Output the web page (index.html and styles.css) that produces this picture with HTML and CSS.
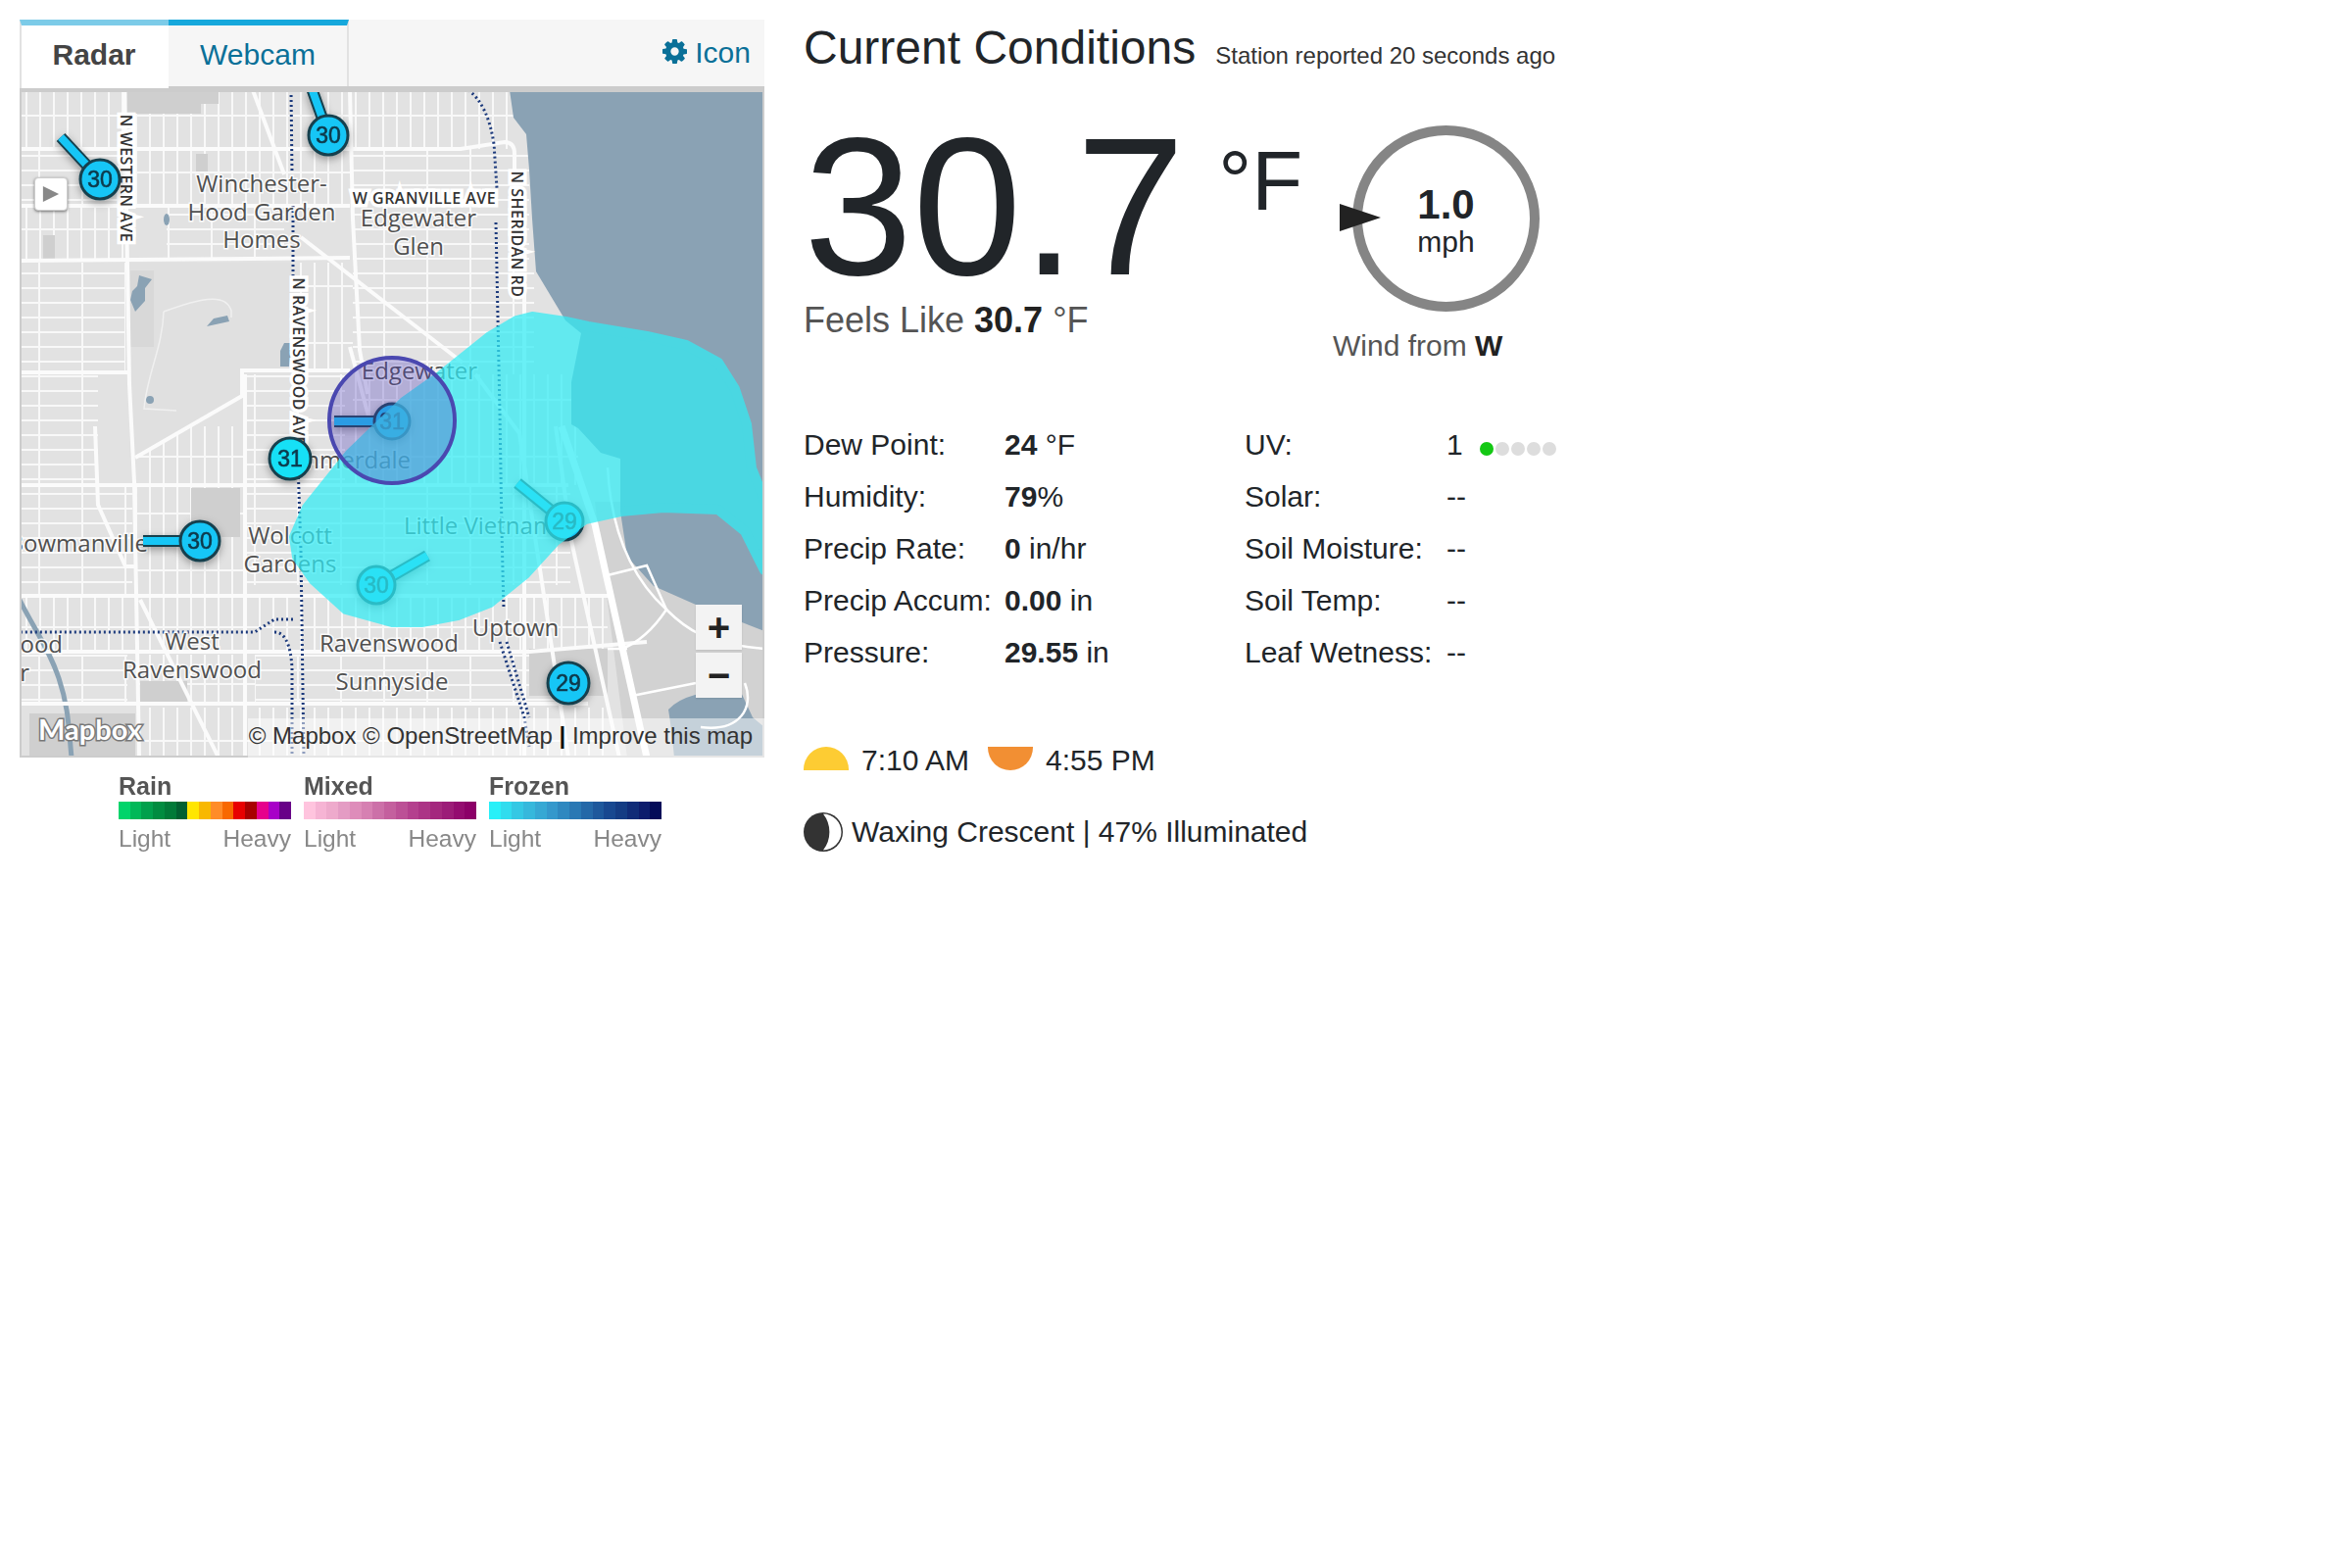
FILE: index.html
```html
<!DOCTYPE html>
<html lang="en">
<head>
    <meta charset="UTF-8">
    <title>Current Conditions</title>
    <link rel="stylesheet" href="styles.css">
</head>
<body>
<div class="page">
    <section class="left">
        <div class="tabs">
            <a class="tab active">Radar</a>
            <a class="tab">Webcam</a>
            <a class="icon-link">
                <svg class="gear" viewBox="0 0 1536 1536"><path d="M1024 768q0-106-75-181t-181-75-181 75-75 181 75 181 181 75 181-75 75-181zm512-109v222q0 12-8 23t-20 13l-185 28q-19 54-39 91 35 50 107 138 10 12 10 25t-9 23q-27 37-99 108t-94 71q-12 0-26-9l-138-108q-44 23-91 38-16 136-29 186-7 28-36 28h-222q-14 0-24.500-8.500t-11.500-21.500l-28-184q-49-16-90-37l-141 107q-10 9-25 9-14 0-25-11-126-114-165-168-7-10-7-23 0-12 8-23 15-21 51-66.500t54-70.500q-27-50-41-99l-183-27q-13-2-21-12.500t-8-23.500v-222q0-12 8-23t19-13l186-28q14-46 39-92-40-57-107-138-10-12-10-24 0-10 9-23 26-36 98.500-107.500t94.500-71.500q13 0 26 10l138 107q44-23 91-38 16-136 29-186 7-28 36-28h222q14 0 24.500 8.500t11.500 21.500l28 184q49 16 90 37l142-107q9-9 24-9 13 0 25 10 129 119 165 170 7 8 7 22 0 12-8 23-15 21-51 66.500t-54 70.500q26 50 41 98l183 28q13 2 21 12.500t8 23.500z"/></svg>
                Icon
            </a>
        </div>

        <div class="map">
            <svg class="map-svg" viewBox="0 0 760 681">
                <defs>
                    <pattern id="blocksV" width="14" height="58" patternUnits="userSpaceOnUse">
                        <path d="M7 0V58M0 26H14" class="minor"/>
                    </pattern>
                    <pattern id="blocksH" width="44" height="15" patternUnits="userSpaceOnUse">
                        <path d="M0 7H44M20 0V15" class="minor"/>
                    </pattern>
                    <filter id="pinShadow" x="-40%" y="-40%" width="180%" height="180%">
                        <feDropShadow dx="0" dy="3" stdDeviation="4" flood-color="#000" flood-opacity=".35"/>
                    </filter>
                </defs>

                <rect class="land" width="760" height="681"/>
                <!-- street blocks -->
                <rect fill="url(#blocksV)" width="340" height="60"/>
                <rect fill="url(#blocksV)" x="340" width="170" height="60"/>
                <rect fill="url(#blocksH)" y="60" width="108" height="58"/>
                <rect fill="url(#blocksV)" x="112" y="60" width="225" height="56"/>
                <rect fill="url(#blocksH)" x="340" y="60" width="180" height="120"/>
                <rect fill="url(#blocksV)" y="118" width="108" height="55"/>
                <rect fill="url(#blocksH)" x="150" y="118" width="120" height="55"/>
                <rect fill="url(#blocksH)" y="176" width="108" height="112"/>
                <rect fill="url(#blocksV)" x="280" y="176" width="60" height="110"/>
                <rect fill="url(#blocksH)" x="340" y="180" width="185" height="110"/>
                <rect fill="url(#blocksH)" y="290" width="80" height="112"/>
                <rect fill="url(#blocksV)" x="120" y="343" width="110" height="60"/>
                <rect fill="url(#blocksH)" x="232" y="290" width="100" height="112"/>
                <rect fill="url(#blocksV)" x="340" y="290" width="230" height="113"/>
                <rect fill="url(#blocksH)" y="405" width="115" height="110"/>
                <rect fill="url(#blocksV)" x="118" y="405" width="112" height="110"/>
                <rect fill="url(#blocksH)" x="232" y="405" width="330" height="100"/>
                <rect fill="url(#blocksV)" x="0" y="518" width="600" height="55"/>
                <rect fill="url(#blocksH)" x="0" y="576" width="110" height="50"/>
                <rect fill="url(#blocksV)" x="120" y="576" width="120" height="50"/>
                <rect fill="url(#blocksH)" x="240" y="576" width="330" height="50"/>
                <rect fill="url(#blocksV)" x="120" y="630" width="480" height="50"/>

                <!-- darker lots -->
                <path class="lot" d="M110 0H203V14H185V24H110Z"/>
                <rect class="lot" x="175" y="406" width="50" height="50"/>
                <rect class="lot" x="123" y="603" width="48" height="25"/>
                <rect class="lot" x="10" y="636" width="108" height="44"/>
                <rect class="lot" x="180" y="65" width="12" height="18"/>
                <rect class="lot" x="24" y="148" width="12" height="24"/>
                <rect class="lot" x="520" y="570" width="80" height="48"/>

                <!-- park and lakefront -->
                <path class="park" d="M112 176H280V286H227V312L118 375H112Z"/>
                <rect class="park-lot" x="113" y="184" width="24" height="78"/>
                <path class="shore" d="M587 420L760 420V681H620Z"/>
                <path class="lake" d="M500 0L504 28 517 45 520 81 523 131 527 185 557 235 573 248 563 298 563 341 570 345 593 370 613 376 613 430 620 476 647 506 690 525 737 543 760 552V0Z"/>
                <path class="lake" d="M662 632Q680 612 735 612L748 640 760 650V681H668Q665 650 662 632Z"/>
                <path class="pond" d="M122 189L135 193 128 202 128 215 118 226 113 214 115 205 120 200Z"/>
                <path class="pond" d="M191 241L214 236 212 230 198 233Z"/>
                <path class="pond" d="M266 266V282L275 282 278 258 270 258Z"/>
                <circle class="pond" cx="133" cy="316" r="4"/>
                <ellipse class="pond" cx="150" cy="132" rx="3" ry="6"/>
                <path class="creek" d="M0 520C15 550 30 570 40 600S50 650 53 681"/>
                <path class="trail" d="M147 226C180 214 210 205 216 225V232M147 226C146 262 130 290 127 325L160 327"/>

                <!-- main roads -->
                <path class="major" d="M107 0L112 300 117 400 122 681"/>
                <path class="major" d="M337 0L340 131 347 265 355 310"/>
                <path class="major" d="M230 290V681"/>
                <path class="major" d="M0 60H450L495 53Q505 53 505 65V100"/>
                <path class="major" d="M0 118H337"/>
                <path class="major" d="M0 174L337 171"/>
                <path class="major" d="M0 288H110"/>
                <path class="major" d="M0 403H560"/>
                <path class="major" d="M0 516H600"/>
                <path class="major" d="M0 573H520L640 563"/>
                <path class="major" d="M0 626H580"/>
                <path class="major" d="M238 0L270 86"/>
                <path class="major" d="M287 150L452 278"/>
                <path class="major" d="M118 375L227 312V286H337"/>
                <path class="major" d="M77 343L80 423 108 486H117"/>
                <path class="major" d="M123 520L203 681"/>
                <path class="major" d="M337 262L358 340"/>
                <path class="major" d="M515 200V681"/>
                <path class="major" d="M465 290L510 350 560 681"/>
                <path class="major" d="M547 343L563 460 612 681"/>
                <path class="major wide" d="M553 343L587 443 640 681"/>
                <path class="thin" d="M600 385Q605 480 660 530 640 560 615 570"/>
                <path class="thin" d="M600 495L640 485 660 530M600 570H620M625 618L690 605"/>
                <path class="thin" d="M660 530C680 550 700 565 760 570"/>
                <path class="thin" d="M740 605C750 630 735 655 695 650"/>

                <!-- transit lines -->
                <path class="rail" d="M277 0L278 85M279 118V195M284 380L287 470 290 681"/>
                <path class="rail" d="M279 540H260L240 553H0"/>
                <path class="rail" d="M260 553Q276 553 278 590V681"/>
                <path class="rail" d="M458 0Q478 15 484 55L487 100M486 135L490 330 492 450 494 530"/>
                <path class="rail" d="M490 563L515 640 520 670"/>
                <path class="rail" d="M497 563L520 640"/>

                <!-- place names -->
                <g class="place">
                    <text x="247" y="104">Winchester-</text>
                    <text x="247" y="133">Hood Garden</text>
                    <text x="247" y="161">Homes</text>
                    <text x="407" y="139">Edgewater</text>
                    <text x="407" y="168">Glen</text>
                    <text x="408" y="295">Edgewater</text>
                    <text x="399" y="386" class="end">Summerdale</text>
                    <text x="392" y="453" class="start">Little Vietnam</text>
                    <text x="276" y="463">Wolcott</text>
                    <text x="276" y="492">Gardens</text>
                    <text x="131" y="471" class="end">Bowmanville</text>
                    <text x="176" y="571">West</text>
                    <text x="176" y="600">Ravenswood</text>
                    <text x="377" y="573">Ravenswood</text>
                    <text x="506" y="557">Uptown</text>
                    <text x="380" y="612">Sunnyside</text>
                    <text x="44" y="574" class="end">Edgewood</text>
                    <text x="10" y="603" class="end">Lincoln Square r</text>
                </g>

                <!-- road names -->
                <g class="road">
                    <text x="413" y="116">W GRANVILLE AVE</text>
                    <text transform="translate(107.500 90) rotate(90)" y="5">N WESTERN AVE</text>
                    <text transform="translate(507 147) rotate(90)" y="5">N SHERIDAN RD</text>
                    <text transform="translate(283.500 277) rotate(90)" y="5">N RAVENSWOOD AVE</text>
                </g>

                <!-- pins -->
                <g class="pin">
                    <path class="stalk" d="M42 48L82 91"/><path class="stalk-in" d="M42 48L82 91"/>
                    <circle cx="82" cy="91" r="20"/><text x="82" y="99">30</text>
                </g>
                <g class="pin">
                    <path class="stalk" d="M298 -2L315 46"/><path class="stalk-in" d="M298 -2L315 46"/>
                    <circle cx="315" cy="46" r="20"/><text x="315" y="54">30</text>
                </g>
                <g class="pin">
                    <path class="stalk" d="M321 338H380"/><path class="stalk-in" d="M321 338H380"/>
                    <circle cx="380" cy="338" r="18"/><text x="380" y="346">31</text>
                </g>
                <g class="pin bright">
                    <circle cx="276" cy="376" r="21"/><text x="276" y="384">31</text>
                </g>
                <g class="pin">
                    <path class="stalk" d="M126 460H184"/><path class="stalk-in" d="M126 460H184"/>
                    <circle cx="184" cy="460" r="20"/><text x="184" y="468">30</text>
                </g>
                <g class="pin">
                    <path class="stalk" d="M416 475L364 505"/><path class="stalk-in" d="M416 475L364 505"/>
                    <circle cx="364" cy="505" r="19"/><text x="364" y="513">30</text>
                </g>
                <g class="pin">
                    <path class="stalk" d="M508 401L556 440"/><path class="stalk-in" d="M508 401L556 440"/>
                    <circle cx="556" cy="440" r="19"/><text x="556" y="448">29</text>
                </g>
                <g class="pin">
                    <circle cx="560" cy="605" r="21"/><text x="560" y="613">29</text>
                </g>

                <!-- frozen radar echo, station circle sits above it -->
                <path class="echo" d="M392 318L430 291 450 275 480 251 507 235 523 231 557 236 580 241 640 251 680 260 713 278 730 305 742 341 747 386 758 413 760 420V490L740 450 713 428 657 426 613 430 577 438 547 460 517 493 480 523 447 536 410 543 380 543 333 530 300 500 283 476 280 456 293 426 317 396 337 371Z"/>
                <circle class="station" cx="380" cy="337" r="64"/>

                <!-- logo -->
                <text class="logo" x="19" y="663">Mapbox</text>
            </svg>

            <button class="play"><svg viewBox="0 0 20 20"><path d="M1 1L19 10 1 19Z"/></svg></button>
            <div class="zoom-ctrl">
                <div class="zoom-btn">+</div>
                <div class="zoom-btn">−</div>
            </div>
            <div class="attrib">© Mapbox © OpenStreetMap <b class="sep">|</b> Improve this map</div>
        </div>

        <div class="legend">
            <div class="legend-col">
                <div class="legend-title">Rain</div>
                <div class="bar bar-rain"></div>
                <div class="legend-ends"><span>Light</span><span>Heavy</span></div>
            </div>
            <div class="legend-col">
                <div class="legend-title">Mixed</div>
                <div class="bar bar-mixed"></div>
                <div class="legend-ends"><span>Light</span><span>Heavy</span></div>
            </div>
            <div class="legend-col">
                <div class="legend-title">Frozen</div>
                <div class="bar bar-frozen"></div>
                <div class="legend-ends"><span>Light</span><span>Heavy</span></div>
            </div>
        </div>
    </section>

    <section class="right">
        <div class="heading">
            <h1>Current Conditions</h1>
            <span class="reported">Station reported 20 seconds ago</span>
        </div>

        <div class="now">
            <div class="temp-block">
                <div class="temp-row">
                    <span class="temp">30.7</span>
                    <span class="temp-unit">°F</span>
                </div>
                <div class="feels">Feels Like <b>30.7</b> °F</div>
            </div>
            <div class="wind-block">
                <div class="dial">
                    <svg class="dial-arrow" viewBox="0 0 42 28"><path d="M0 0L42 14 0 28Z"/></svg>
                    <b class="speed">1.0</b>
                    <span class="speed-unit">mph</span>
                </div>
                <div class="wind-from">Wind from <b>W</b></div>
            </div>
        </div>

        <div class="stats">
            <div class="stat-grid">
                <span>Dew Point:</span><span><b>24</b> °F</span>
                <span>Humidity:</span><span><b>79</b>%</span>
                <span>Precip Rate:</span><span><b>0</b> in/hr</span>
                <span>Precip Accum:</span><span><b>0.00</b> in</span>
                <span>Pressure:</span><span><b>29.55</b> in</span>
            </div>
            <div class="stat-grid second">
                <span>UV:</span>
                <span class="uv">1
                    <i class="dots"><i class="dot on"></i><i class="dot"></i><i class="dot"></i><i class="dot"></i><i class="dot"></i></i>
                </span>
                <span>Solar:</span><span>--</span>
                <span>Soil Moisture:</span><span>--</span>
                <span>Soil Temp:</span><span>--</span>
                <span>Leaf Wetness:</span><span>--</span>
            </div>
        </div>

        <div class="sun">
            <i class="sunrise"></i><span>7:10 AM</span>
            <i class="sunset"></i><span>4:55 PM</span>
        </div>

        <div class="moon">
            <svg class="moon-icon" viewBox="0 0 40 40">
                <circle cx="20" cy="20" r="20" fill="#333"/>
                <path d="M20 1.500A18.500 18.500 0 0 1 20 38.500A30 30 0 0 0 20 1.500Z" fill="#fff"/>
            </svg>
            <span>Waxing Crescent | 47% Illuminated</span>
        </div>
    </section>
</div>
</body>
</html>
```

FILE: styles.css
```css
body {
    margin: 0;
    background: #fff;
    color: #212529;
    font-family: "Liberation Sans", Arial, sans-serif;
}
.page {
    display: flex;
    gap: 40px;
    padding: 20px;
}
.left {
    width: 760px;
    flex: none;
}

/* tabs */
.tabs {
    display: flex;
    align-items: stretch;
    height: 68px;
    background: #f6f6f6;
    border-bottom: 4px solid #ccc;
}
.tab {
    display: flex;
    align-items: center;
    justify-content: center;
    box-sizing: border-box;
    width: 184px;
    padding-bottom: 2px;
    border-top: 6px solid #16a8dc;
    border-right: 2px solid #e2e2e2;
    font-size: 30px;
    color: #0a7098;
}
.tab.active {
    width: 152px;
    height: 70px;
    padding: 0 2px 4px 0;
    border-top-color: #7ccbe8;
    border-left: 2px solid #e2e2e2;
    border-right: none;
    background: #fff;
    font-weight: bold;
    color: #444;
}
.icon-link {
    display: flex;
    align-items: center;
    gap: 8px;
    margin-left: auto;
    padding: 0 14px 0 0;
    font-size: 30px;
    color: #0a7098;
}
.gear {
    width: 25px;
    height: 25px;
    margin-bottom: 3px;
    fill: #0a7098;
}

/* map */
.map {
    position: relative;
    height: 681px;
    overflow: hidden;
    outline: 2px solid #ccc;
    outline-offset: -2px;
}
.map-svg {
    display: block;
    width: 100%;
    height: 100%;
}
.land { fill: #e2e2e2; }
.lot { fill: #cfcfcf; }
.park { fill: #e0e0e0; }
.park-lot { fill: #d8d8d8; }
.shore { fill: #d2d2d2; }
.lake { fill: #8aa2b4; }
.pond { fill: #8aa2b4; }
.creek { fill: none; stroke: #8aa2b4; stroke-width: 5; }
.trail { fill: none; stroke: #f0f0f0; stroke-width: 1.500; }
.minor { fill: none; stroke: #f8f8f8; stroke-width: 2; }
.major { fill: none; stroke: #fbfbfb; stroke-width: 4; }
.major.wide { stroke: #fff; stroke-width: 7; }
.thin { fill: none; stroke: #fff; stroke-width: 2.500; }
.rail {
    fill: none;
    stroke: #1c3a7c;
    stroke-width: 3;
    stroke-dasharray: 2 3;
}
.place text {
    font-family: "Open Sans", sans-serif;
    font-size: 24px;
    text-anchor: middle;
    fill: #505050;
    stroke: rgba(255, 255, 255, .85);
    stroke-width: 3px;
    paint-order: stroke;
}
.place text.end { text-anchor: end; }
.place text.start { text-anchor: start; }
.road text {
    font-family: "Open Sans", sans-serif;
    font-size: 16px;
    font-weight: 600;
    letter-spacing: .5px;
    text-anchor: middle;
    fill: #333;
    stroke: #fff;
    stroke-width: 7px;
    paint-order: stroke;
}
.station {
    fill: rgba(84, 70, 190, .33);
    stroke: #4a48b0;
    stroke-width: 4;
}
.pin { filter: url(#pinShadow); }
.pin circle {
    fill: #18c6f6;
    stroke: #17404e;
    stroke-width: 3;
}
.pin.bright circle { fill: #12e0f6; }
.pin text {
    font-family: "Liberation Sans", sans-serif;
    font-size: 23px;
    text-anchor: middle;
    fill: #0d3a4c;
    stroke: #0d3a4c;
    stroke-width: .6px;
}
.stalk { fill: none; stroke: #17404e; stroke-width: 12; }
.stalk-in { fill: none; stroke: #18c6f6; stroke-width: 8; }
.echo {
    fill: rgb(50, 236, 245);
    stroke: rgb(50, 236, 245);
    stroke-width: 10;
    stroke-linejoin: round;
    opacity: .72;
}
.logo {
    font-family: Lato, sans-serif;
    font-size: 29px;
    font-weight: 700;
    fill: #fff;
    stroke: #777;
    stroke-width: 3px;
    paint-order: stroke;
}
.play {
    position: absolute;
    left: 15px;
    top: 89px;
    width: 34px;
    height: 34px;
    padding: 7px;
    background: #fff;
    border: 1px solid #ccc;
    border-radius: 4px;
    box-shadow: 0 1px 3px rgba(0, 0, 0, .5);
}
.play svg {
    display: block;
    fill: #888;
}
.zoom-ctrl {
    position: absolute;
    left: 690px;
    top: 525px;
    width: 47px;
    display: flex;
    flex-direction: column;
    gap: 3px;
}
.zoom-btn {
    height: 46px;
    background: #f3f3f3;
    font-size: 40px;
    font-weight: bold;
    line-height: 46px;
    text-align: center;
    color: #222;
    box-shadow: 0 1px 2px rgba(0, 0, 0, .1);
}
.attrib {
    position: absolute;
    right: 0;
    bottom: 0;
    width: 527px;
    height: 40px;
    box-sizing: border-box;
    padding: 3px 12px 0 0;
    background: rgba(255, 255, 255, .5);
    font-size: 24px;
    line-height: 30px;
    text-align: right;
    white-space: nowrap;
    color: #333;
}
.sep { color: #111; }

/* radar legend */
.legend {
    display: flex;
    gap: 13px;
    margin: 15px 0 0 101px;
    filter: blur(.6px);
}
.legend-col {
    width: 176px;
}
.legend-title {
    font-size: 25px;
    font-weight: bold;
    line-height: 28px;
    color: #555;
}
.bar {
    height: 18px;
    margin-top: 2px;
}
.bar-rain {
    background: linear-gradient(to right,
        #00d46a 0 6.670%, #00b858 0 13.340%, #00a04c 0 20%, #008c40 0 26.670%, #007a38 0 33.340%, #006030 0 40%,
        #ffe600 0 46.670%, #f8b800 0 53.340%, #ff8c28 0 60%, #f86800 0 66.670%, #e80000 0 73.340%, #a80000 0 80%,
        #e6008c 0 86.670%, #a800c8 0 93.340%, #680088 0 100%);
}
.bar-mixed {
    background: linear-gradient(to right,
        #ffc4de 0 6.670%, #f6b4d4 0 13.340%, #eeaacc 0 20%, #e49cc4 0 26.670%, #de8cba 0 33.340%, #d680b2 0 40%,
        #cc70a8 0 46.670%, #c4609e 0 53.340%, #bc5096 0 60%, #b4408e 0 66.670%, #ac3486 0 73.340%, #a4287e 0 80%,
        #9c1c78 0 86.670%, #940c70 0 93.340%, #8c0068 0 100%);
}
.bar-frozen {
    background: linear-gradient(to right,
        #28f0f8 0 6.670%, #30dcee 0 13.340%, #34c8e4 0 20%, #36b8dc 0 26.670%, #36a8d4 0 33.340%, #3498cc 0 40%,
        #2e88c0 0 46.670%, #2a78b4 0 53.340%, #2468a8 0 60%, #1e589c 0 66.670%, #184890 0 73.340%, #143c84 0 80%,
        #102c78 0 86.670%, #0c1c6c 0 93.340%, #040c58 0 100%);
}
.legend-ends {
    display: flex;
    justify-content: space-between;
    margin-top: 6px;
    font-size: 24.500px;
    line-height: 28px;
    color: #888;
}

/* current conditions */
.right {
    width: 1000px;
    flex: none;
}
.heading {
    display: flex;
    align-items: baseline;
    gap: 20px;
    height: 59px;
    padding-top: 1px;
}
h1 {
    margin: 0;
    font-size: 48px;
    font-weight: normal;
    line-height: 56px;
}
.reported {
    font-size: 24px;
    color: #333;
}
.now {
    display: flex;
    height: 347px;
}
.temp-block {
    width: 545px;
    flex: none;
    padding-top: 21px;
    box-sizing: border-box;
}
.temp-row {
    display: flex;
    align-items: flex-start;
    height: 205px;
}
.temp {
    font-size: 200px;
    line-height: 220px;
}
.temp-unit {
    margin: 34px 0 0 34px;
    font-size: 85px;
    line-height: 100px;
}
.feels {
    font-size: 36px;
    color: #555;
}
.feels b { color: #222; }
.wind-block {
    width: 240px;
    padding-top: 48px;
}
.dial {
    position: relative;
    display: flex;
    flex-direction: column;
    align-items: center;
    box-sizing: border-box;
    width: 191px;
    height: 190px;
    margin-left: 15px;
    border: 10px solid #858585;
    border-radius: 50%;
}
.dial-arrow {
    position: absolute;
    left: -23px;
    top: 70px;
    width: 42px;
    height: 28px;
    fill: #222;
}
.speed {
    margin-top: 49px;
    font-size: 42px;
    line-height: 44px;
}
.speed-unit {
    font-size: 30px;
    line-height: 32px;
}
.wind-from {
    font-size: 30px;
    margin: 18px 0 0 -5px;
    color: #555;
}
.wind-from b { color: #222; }

.stats {
    display: flex;
}
.stat-grid {
    display: grid;
    grid-template-columns: 205px auto;
    grid-auto-rows: 53px;
    width: 450px;
    flex: none;
    font-size: 30px;
    line-height: 53px;
}
.stat-grid.second { grid-template-columns: 206px auto; }
.uv { display: flex; gap: 17px; align-items: center; }
.dots { display: flex; gap: 2px; padding-top: 8px; }
.dot {
    width: 14px;
    height: 14px;
    border-radius: 50%;
    background: #ddd;
}
.dot.on { background: #14c814; }

.sun {
    display: flex;
    align-items: center;
    gap: 13px;
    margin-top: 64px;
    font-size: 30px;
    line-height: 40px;
}
.sun span { margin-right: 6px; }
.sunrise, .sunset {
    width: 46px;
    height: 24px;
    margin-bottom: 4px;
}
.sunrise {
    background: #fdcc33;
    border-radius: 23px 23px 0 0;
}
.sunset {
    background: #f28f33;
    border-radius: 0 0 23px 23px;
}
.moon {
    display: flex;
    align-items: center;
    gap: 9px;
    margin-top: 33px;
    font-size: 30px;
}
.moon-icon {
    width: 40px;
    height: 40px;
}
```
